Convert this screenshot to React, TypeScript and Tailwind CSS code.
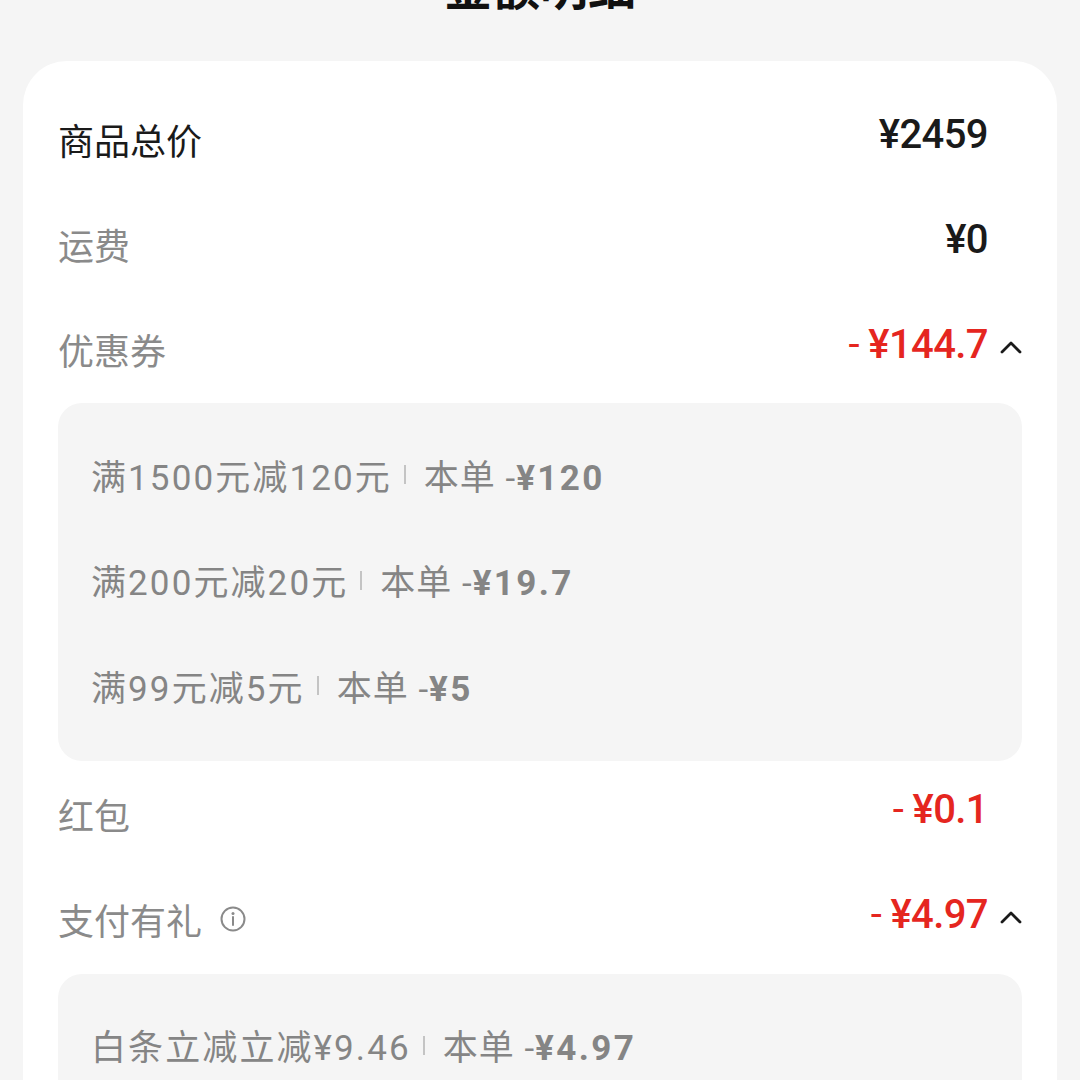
import { ReactNode } from "react";

const cjk = "font-['Noto_Sans_CJK_SC',sans-serif]";
const num = "font-['Roboto','Noto_Sans_CJK_SC',sans-serif]";

function ChevronUp() {
  return (
    <svg width="22" height="14" viewBox="0 0 22 14" fill="none">
      <path d="M2 12 L11 3 L20 12" stroke="#1a1a1a" strokeWidth="2.8" strokeLinecap="round" strokeLinejoin="round" />
    </svg>
  );
}

function InfoIcon() {
  return (
    <svg width="28" height="28" viewBox="0 0 28 28" fill="none">
      <circle cx="14" cy="14" r="11.5" stroke="#8a8a8a" strokeWidth="2" />
      <circle cx="14" cy="8.6" r="1.5" fill="#8a8a8a" />
      <path d="M14 12 V20" stroke="#8a8a8a" strokeWidth="2" strokeLinecap="round" />
    </svg>
  );
}

function Row({
  label,
  dark,
  value,
  red,
  chevron,
  info,
}: {
  label: string;
  dark?: boolean;
  value: ReactNode;
  red?: boolean;
  chevron?: boolean;
  info?: boolean;
}) {
  return (
    <div className="flex h-[105px] items-center justify-between">
      <div className={`mb-[4px] flex items-center gap-[17px] text-[36px] ${cjk} ${dark ? "text-[#1a1a1a]" : "text-[#8a8a8a]"}`}>
        <span>{label}</span>
        {info && <InfoIcon />}
      </div>
      <div className="flex items-center">
        <span
          className={`mb-[12px] text-[40px] leading-none font-medium tracking-[-0.6px] ${num} ${
            red ? "text-[#e5261f]" : "text-[#1a1a1a]"
          }`}
        >
          {value}
        </span>
        <span className="flex w-[34px] justify-end mb-[8px]">{chevron && <ChevronUp />}</span>
      </div>
    </div>
  );
}

function Discount(props: { rule: string; amount: string }) {
  return (
    <div className={`flex h-[105.5px] items-center text-[35px] text-[#858585] ${num}`}>
      <span className="tracking-[2.1px]">{props.rule}</span>
      <span className="ml-[12px] mr-[18px] mb-[8px] h-[19px] w-[2px] bg-[#c4c4c4]" />
      <span className="tracking-[1px]">本单 -</span>
      <span className="font-bold tracking-[2.4px]">{props.amount}</span>
    </div>
  );
}

function Minus({ v }: { v: string }) {
  return (
    <>
      <span className="font-normal">- </span>
      {v}
    </>
  );
}

export default function App() {
  return (
    <div className="min-h-[1080px] w-full bg-[#f5f5f5] overflow-hidden">
      <div className="flex h-[61px] justify-center overflow-hidden">
        <span className={`-mt-[46px] text-[48px] leading-[60px] font-bold text-[#111] ${cjk}`}>金额明细</span>
      </div>
      <div className="mx-[23px] rounded-t-[44px] bg-white px-[35px] pt-[27px] pb-10">
        <Row label="商品总价" dark value="¥2459" />
        <Row label="运费" value="¥0" />
        <Row label="优惠券" red chevron value={<Minus v="¥144.7" />} />
        <div className="rounded-[24px] bg-[#f5f5f5] pl-[33px] pt-[23px] pb-[18px]">
          <Discount rule="满1500元减120元" amount="¥120" />
          <Discount rule="满200元减20元" amount="¥19.7" />
          <Discount rule="满99元减5元" amount="¥5" />
        </div>
        <div className="h-[3px]" />
        <Row label="红包" red value={<Minus v="¥0.1" />} />
        <Row label="支付有礼" info red chevron value={<Minus v="¥4.97" />} />
        <div className="rounded-[24px] bg-[#f5f5f5] pl-[33px] pt-[23px] pb-[18px]">
          <Discount rule="白条立减立减¥9.46" amount="¥4.97" />
        </div>
      </div>
    </div>
  );
}
